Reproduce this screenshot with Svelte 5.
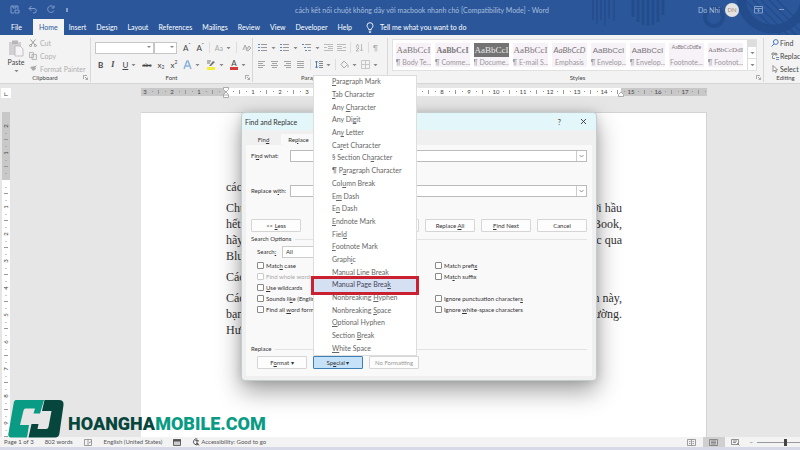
<script lang="ts">
    const tabs = ['File', 'Home', 'Insert', 'Design', 'Layout', 'References', 'Mailings', 'Review', 'View', 'Developer', 'Help'];

    const styles = [
        { sample: 'AaBbCcI', name: '¶ Body Te...', kind: 'serif' },
        { sample: 'AaBbCcI', name: '¶ Comme...', kind: 'serif bold' },
        { sample: 'AaBbCcI', name: '¶ Docume...', kind: 'serif dark' },
        { sample: 'AaBbCcI', name: '¶ E-mail S...', kind: 'serif' },
        { sample: 'AaBbCcD', name: 'Emphasis', kind: 'italic' },
        { sample: 'AaBbCcI', name: '¶ Envelop...', kind: 'sans' },
        { sample: 'AaBbCcI', name: '¶ Envelop...', kind: 'sans' },
        { sample: 'AaBbCcDdEe', name: 'Footnote...', kind: 'tiny' },
        { sample: 'AaBbCcDdI', name: '¶ Footnot...', kind: 'serif small' },
    ];

    // "&" goes before the letter that is the keyboard shortcut
    const specials = [
        '&Paragraph Mark', '&Tab Character', 'Any &Character', 'Any Di&git', 'An&y Letter',
        'Ca&ret Character', '§ Section Ch&aracter', '¶ P&aragraph Character', 'Col&umn Break',
        'E&m Dash', 'E&n Dash', '&Endnote Mark', 'Fiel&d', '&Footnote Mark', 'Graph&ic',
        'Manual &Line Break', 'Manual Page Brea&k', 'Nonbreaking &Hyphen', 'Nonbreaking &Space',
        '&Optional Hyphen', 'Section &Break', '&White Space',
    ];

    const leftOptions = ['Matc&h case', 'Find whole words onl&y', '&Use wildcards', 'Sounds li&ke (English)', 'Find all &word forms'];
    const rightOptions = ['Match prefi&x', 'Ma&tch suffix', '', 'Ignore punctuation character&s', 'Ignore &white-space characters'];

    const paragraphs = [
        [['cách', '']],
        [['Chuột', 'với hầu'], ['hết', 'MacBook,'], ['hãy', 'hoặc qua'], ['Bluetooth', '']],
        [['Cách', '']],
        [['Các', 'bên này,'], ['bạn', 'thường.'], ['Hướng', '']],
    ];

    const CM = 27;
    const hMarks = Array.from({ length: 21 }, (_, i) => i - 3);
    const vMarks = Array.from({ length: 12 }, (_, i) => i - 2);

    let selected = $state('Manual Page Brea&k');
</script>

{#snippet key(text: string)}{@const p = text.split('&')}{p[0]}<u>{p[1][0]}</u>{p[1].slice(1)}{/snippet}

{#snippet caret()}
    <svg class="caret" width="5" height="4" viewBox="0 0 5 4"><path d="M.5 1h4L2.5 3.2z" fill="currentColor" /></svg>
{/snippet}

{#snippet launcher()}
    <svg class="launcher" width="5" height="5" viewBox="0 0 5 5" fill="none" stroke="#888" stroke-width=".7"><path d="M.5 4V.5H4M2 2l2.3 2.3M4.5 2.5v2h-2" /></svg>
{/snippet}

{#snippet option(text: string)}
    <label class="check" class:off={text.startsWith('Find whole')}>
        <input type="checkbox" disabled={text.startsWith('Find whole')} />
        <span>{@render key(text)}</span>
    </label>
{/snippet}

<div class="word">
    <header class="top">
        <svg class="pattern" width="215" height="35" viewBox="0 0 215 35" fill="none" stroke="#234c8c">
            <path d="M8 0v20M12 0v24M16 0v20M20 0v25M24 0v19M29 0v21" stroke-width="1.5" />
            <path d="M48 0v17M53 0v22M58 0v25M63 0v26M68 0v25M73 0v22M78 0v15" stroke-width="3" />
            <circle cx="129" cy="17" r="9" stroke-width="4" />
            <circle cx="188" cy="-3" r="32" stroke-width="9" />
            <path d="M160 0l35 35M168 0l35 35M176 0l35 35M184 0l31 31M192 0l23 23" stroke-width="1.5" />
        </svg>
        <div class="titlebar">
            <div class="quick">
                <button aria-label="Save"><svg width="10" height="9" viewBox="0 0 10 9"><path d="M1 1h7v3M1 1v7h3M3 1v2h3V1M5 8V5h4v3z" /></svg></button>
                <button aria-label="Undo"><svg width="10" height="9" viewBox="0 0 10 9"><path d="M3.5 1L1 3.5 3.5 6M1 3.5h5a2 2 0 0 1 0 4.5H5" /></svg></button>
                <button aria-label="Repeat"><svg width="10" height="9" viewBox="0 0 10 9"><path d="M7.5 2A3.3 3.3 0 1 0 8 5.5M8 .5v2.5H5.5" /></svg></button>
                <button aria-label="Customize"><svg width="6" height="9" viewBox="0 0 6 9"><path d="M2 4h2M2 6h2" stroke="#dce5f3" /></svg></button>
            </div>
            <span class="doc-title">cách kết nối chuột không dây với macbook nhanh chó [Compatibility Mode] - Word</span>
            <div class="account">
                <span>Do Nhi</span>
                <span class="avatar">DN</span>
                <button aria-label="Ribbon display"><svg width="9" height="8" viewBox="0 0 9 8"><path d="M.5.5h8v6.500h-8zM.5 2.500h8M4.500 6V3.500M3.300 4.600l1.200-1.200 1.200 1.200" /></svg></button>
                <button aria-label="Minimize"><svg width="7" height="8" viewBox="0 0 7 8"><path d="M1 3.500h5" /></svg></button>
            </div>
        </div>
        <nav class="tabs">
            {#each tabs as tab}
                <button class="tab" class:active={tab === 'Home'}>{tab}</button>
            {/each}
            <button class="tell">
                <svg width="8" height="11" viewBox="0 0 8 11" fill="none" stroke="#fff" stroke-width=".9"><path d="M2.700 7.500C2.700 6 1 5.500 1 3.700a3 3 0 0 1 6 0C7 5.500 5.300 6 5.300 7.500zM2.800 9.200h2.400M3.200 10.500h1.600" /></svg>
                Tell me what you want to do
            </button>
        </nav>
    </header>

    <section class="ribbon">
        <div class="group clipboard">
            <div class="body">
                <button class="paste">
                    <svg width="16" height="18" viewBox="0 0 16 18"><path d="M1 3h12v13H1z" fill="#d3cfd2" /><path d="M4 1.500h6V5H4z" fill="#b9b5b8" /><path d="M7 7h5l3 3v7H7z" fill="#f6f4f6" stroke="#b5b5b5" stroke-width=".8" /></svg>
                    <span>Paste</span>
                    {@render caret()}
                </button>
                <div class="stack muted">
                    <button><svg width="8" height="8" viewBox="0 0 8 8" fill="none" stroke="#999"><path d="M1.500.5L6 6M6.500.5L2 6" /><circle cx="1.600" cy="6.600" r="1" /><circle cx="6.400" cy="6.600" r="1" /></svg>Cut</button>
                    <button><svg width="8" height="8" viewBox="0 0 8 8" fill="#eee" stroke="#aaa" stroke-width=".8"><path d="M.5.5h4v5h-4zM3 2.500h4.500v5H3z" /></svg>Copy</button>
                    <button><svg width="8" height="8" viewBox="0 0 8 8"><path d="M1 2l3 4 3-2-1-3z" fill="#aaa" /><path d="M6 2l1.500-1.500" stroke="#aaa" /></svg>Format Painter</button>
                </div>
            </div>
            <div class="caption">Clipboard{@render launcher()}</div>
        </div>

        <div class="group font">
            <div class="body rows">
                <div class="row">
                    <select class="face" aria-label="Font"><option></option></select>
                    <select class="size" aria-label="Font size"><option></option></select>
                    <button class="grow">A<sup>ˆ</sup></button>
                    <button class="grow">A<sup>ˇ</sup></button>
                    <i class="sep"></i>
                    <button class="pale">Aa {@render caret()}</button>
                    <i class="sep"></i>
                    <button aria-label="Clear formatting"><svg width="10" height="9" viewBox="0 0 10 9" fill="none" stroke="#aaa"><path d="M1 7l2-5 2 4M4 7l3-4 2 2-3 3z" fill="#ddd" /></svg></button>
                </div>
                <div class="row letters">
                    <button><b>B</b></button>
                    <button><em>I</em></button>
                    <button><u>U</u> {@render caret()}</button>
                    <button class="strike">abc</button>
                    <button>x<sub>2</sub></button>
                    <button>x<sup>2</sup></button>
                    <button aria-label="Text effects"><svg width="9" height="10" viewBox="0 0 9 10" fill="none" stroke="#8db2dd" stroke-width="1.500"><path d="M1 9l3-8h1l3 8M2.500 6h4" /></svg>{@render caret()}</button>
                    <button aria-label="Highlight"><svg width="10" height="10" viewBox="0 0 10 10"><path d="M1 7h8v3H1z" fill="#f4ee35" /><path d="M3 6l4-5 2 1-4 4z" fill="#777" /><path d="M1 1h4M1 3h3" stroke="#777" /></svg>{@render caret()}</button>
                    <button class="colour"><span>A</span>{@render caret()}</button>
                </div>
            </div>
            <div class="caption">Font{@render launcher()}</div>
        </div>

        <div class="group para">
            <div class="body rows">
                <div class="row">
                    {#each [0, 1, 2] as n}
                        <button aria-label="List"><svg width="10" height="9" viewBox="0 0 10 9"><path d="M0 1.500h2M{n === 2 ? 2 : 0} 4.500h2M{n === 2 ? 3 : 0} 7.500h2" stroke="#5c87c0" /><path d="M3 1.500h6M{n === 2 ? 5 : 3} 4.500h{n === 2 ? 4 : 6}M{n === 2 ? 6 : 3} 7.500h{n === 2 ? 3 : 6}" stroke="#999" /></svg>{@render caret()}</button>
                    {/each}
                    <button aria-label="Decrease indent"><svg width="9" height="9" viewBox="0 0 9 9" stroke="#bbb"><path d="M0 1.500h9M4 3.500h5M4 5.500h5M0 7.500h9M0 4.500h3" /></svg></button>
                    <button aria-label="Increase indent"><svg width="9" height="9" viewBox="0 0 9 9" stroke="#bbb"><path d="M0 1.500h9M0 3.500h5M0 5.500h5M0 7.500h9M6 4.500h3" /></svg></button>
                    <i class="sep"></i>
                    <button aria-label="Sort"><svg width="9" height="9" viewBox="0 0 9 9" fill="none" stroke="#aaa" stroke-width=".8"><path d="M1 4l1.500-3L4 4M1 5h3L1 8h3M6.500 1v7M5 6.500L6.500 8 8 6.500" /></svg></button>
                    <i class="sep"></i>
                    <button class="pale">¶</button>
                </div>
                <div class="row">
                    {#each ['M0 1.500h7M0 3.500h5M0 5.500h7M0 7.500h5', 'M0 1.500h7M1 3.500h5M0 5.500h7M1 7.500h5', 'M0 1.500h7M2 3.500h5M0 5.500h7M2 7.500h5', 'M0 1.500h7M0 3.500h7M0 5.500h7M0 7.500h7'] as d}
                        <button class="align" aria-label="Align"><svg width="7" height="9" viewBox="0 0 7 9" stroke="#a5a5a5"><path {d} /></svg></button>
                    {/each}
                    <i class="sep"></i>
                    <button aria-label="Line spacing"><svg width="8" height="9" viewBox="0 0 8 9"><path d="M1.500 1v7M0 2.500L1.500 1 3 2.500M0 6.500L1.500 8 3 6.500" fill="none" stroke="#4c7dbb" /><path d="M4 1.500h4M4 3.500h4M4 5.500h4M4 7.500h4" stroke="#888" /></svg>{@render caret()}</button>
                    <i class="sep"></i>
                    <button class="pale" aria-label="Shading"><svg width="9" height="9" viewBox="0 0 9 9" fill="none" stroke="#aaa"><path d="M1 4.500L4 1l3.500 3.500L4 8zM8 5v2.500" /></svg>{@render caret()}</button>
                    <button class="pale" aria-label="Borders"><svg width="9" height="9" viewBox="0 0 9 9" fill="none" stroke="#bbb" stroke-width=".8"><path d="M.5.5h8v8h-8zM4.500.5v8M.5 4.500h8" /></svg>{@render caret()}</button>
                </div>
            </div>
            <div class="caption left">Paragraph</div>
        </div>

        <div class="group styles">
            <div class="gallery">
                {#each styles as s}
                    <button class="style">
                        <span class="sample {s.kind}">{s.sample}</span>
                        <span class="name">{s.name}</span>
                    </button>
                {/each}
                <div class="scroll">
                    <button aria-label="Up"></button>
                    <button aria-label="Down">{@render caret()}</button>
                    <button aria-label="More">{@render caret()}</button>
                </div>
            </div>
            <div class="caption">Styles{@render launcher()}</div>
        </div>

        <div class="group editing">
            <div class="stack">
                <button><svg width="8" height="8" viewBox="0 0 8 8" fill="none" stroke="#4377b9"><circle cx="4.800" cy="3" r="2.400" /><path d="M3 5L.5 7.500" /></svg>Find</button>
                <button><svg width="8" height="8" viewBox="0 0 8 8" fill="none" stroke="#777" stroke-width=".8"><path d="M1 3V1h2v2zM4 .5V3h2V1.500H4M1.500 4v2.500H4" /><path d="M5 5.500h3M5 7.500h3" stroke="#4377b9" /></svg>Replace</button>
                <button><svg width="8" height="8" viewBox="0 0 8 8" fill="#fff" stroke="#777" stroke-width=".8"><path d="M2 .5v6l1.500-1.500L4.500 7.500l1-.5-1-2h2z" /></svg>Select</button>
            </div>
            <div class="caption">Editing</div>
        </div>
    </section>

    <div class="ruler-row">
        <div class="corner">∟</div>
        <svg class="hruler" height="8">
            <rect width="100%" height="8" fill="#c8c8c8" />
            <rect x="85" width="395" height="8" fill="#fff" />
            {#each hMarks as n}
                {@const x = 85 + n * CM}
                {#if n !== 0}<text {x} y="6">{Math.abs(n)}</text>{/if}
                <path d="M{x + 7} 3.500h1M{x + 13.500} 2v4M{x + 20} 3.500h1" stroke="#999" />
            {/each}
        </svg>
        <svg class="marker start" width="6" height="11" viewBox="0 0 6 11"><path d="M.5.5h5v2L3 5 .5 2.500zM3 5l2.500 2.500v3h-5v-3zM.5 8h5" /></svg>
        <svg class="marker end" width="6" height="11" viewBox="0 0 6 11"><path d="M3 5l2.500 2.500v2h-5v-2z" /></svg>
    </div>

    <main class="workspace">
        <svg class="vruler" width="8">
            <rect width="8" height="100%" fill="#fff" />
            <rect width="8" height="68" fill="#c8c8c8" />
            {#each vMarks as n}
                {@const y = 68 + n * CM}
                {#if n !== 0}<text x="0" y="2" transform="translate(4 {y}) rotate(-90)">{Math.abs(n)}</text>{/if}
                <path d="M4 {y + 7}v1M2 {y + 13.500}h4M4 {y + 20}v1" stroke="#999" />
            {/each}
        </svg>
        <article class="page">
            {#each paragraphs as lines}
                <div class="para-text">
                    {#each lines as [start, end]}
                        <p><span>{start}</span><span>{end}</span></p>
                    {/each}
                </div>
            {/each}
        </article>
    </main>

    <footer class="status">
        <span>Page 1 of 3</span>
        <span>802 words</span>
        <svg width="9" height="7" viewBox="0 0 9 7" fill="none" stroke="#888" stroke-width=".8"><path d="M.5.5h7v6h-7zM4 .5v6M5 4l3-2" /></svg>
        <span>English (United States)</span>
        <svg width="8" height="7" viewBox="0 0 8 7"><path d="M.5.5h7v6h-7z" fill="#ccc" stroke="#666" /><path d="M0 1.500h8" stroke="#555" stroke-width="2" /></svg>
        <span class="access"><svg width="8" height="8" viewBox="0 0 8 8" fill="none" stroke="#444" stroke-width=".9"><path d="M5.500 1A3 3 0 1 0 6.500 6M3 2l4 1M5 3v2l2 2.500M5 5L3.500 7" /></svg>Accessibility: Good to go</span>
        <div class="views">
            <button aria-label="Read mode"><svg width="9" height="7" viewBox="0 0 9 7" fill="none" stroke="#888" stroke-width=".8"><path d="M.5.5h8v6h-8zM4.500 0v7M2 2.500h1.500M2 4.500h1.500M5.500 2.500H7M5.500 4.500H7" /></svg></button>
            <button class="on" aria-label="Print layout"><svg width="9" height="7" viewBox="0 0 9 7" fill="none" stroke="#777" stroke-width=".8"><path d="M.5.5h8v6h-8zM2 2h5M2 3.500h5M2 5h5" /></svg></button>
            <button aria-label="Web layout"><svg width="9" height="7" viewBox="0 0 9 7" fill="none" stroke="#777" stroke-width=".8"><path d="M.5.5h7v5h-7zM2 2h4M2 3.500h3M6 4l2.500 2.500" /></svg></button>
            <span class="minus">−</span>
            <input type="range" aria-label="Zoom" min="0" max="100" value="50" />
        </div>
    </footer>

    <div class="brand">
        <svg width="56" height="38" viewBox="0 0 56 38">
            <path d="M8 0H36L32 13.500H25.500L27 8.500H17.500Q16 8.500 15.500 10.500L12 25H21L19 37.500H3Q-.5 37.500.5 33L5.500 4Q6 0 8 0Z" fill="#0a9b84" />
            <path d="M36.500 0H51Q56 0 55.500 5L51.500 33Q51 37.500 47 37.500H20.500L23.500 24H30.500L29.500 29H38Q40 29 40.500 27L43.500 11H34Z" fill="#07463d" />
        </svg>
        <span><span class="deep">HOANGHA</span>MOBILE.COM</span>
    </div>

    <div class="dialog" role="dialog" aria-label="Find and Replace">
        <div class="dialog-title">
            <span>Find and Replace</span>
            <button aria-label="Help">?</button>
            <button aria-label="Close"><svg width="7" height="7" viewBox="0 0 7 7" stroke="#333" stroke-width=".9"><path d="M1 1l5 5M6 1L1 6" /></svg></button>
        </div>
        <div class="dialog-tabs">
            <button>{@render key('Fin&d')}</button>
            <button class="active">{@render key('Re&place')}</button>
        </div>
        <div class="panel">
            {#each ['Fi&nd what:', 'Replace w&ith:'] as text, i}
                <div class="field">
                    <label for="term{i}">{@render key(text)}</label>
                    <div class="combo">
                        <input id="term{i}" type="text" />
                        <button aria-label="History"><svg width="5" height="4" viewBox="0 0 5 4" fill="none" stroke="#777" stroke-width=".8"><path d="M.5 1l2 2 2-2" /></svg></button>
                    </div>
                </div>
            {/each}
            <div class="actions">
                <button class="btn first">{@render key('<< &Less')}</button>
                <button class="btn">{@render key('&Replace')}</button>
                <button class="btn">{@render key('Replace &All')}</button>
                <button class="btn">{@render key('&Find Next')}</button>
                <button class="btn">Cancel</button>
            </div>
            <div class="legend">Search Options</div>
            <div class="search">
                <label for="dir">{@render key('Search&:')}</label>
                <select id="dir"><option>All</option><option>Down</option><option>Up</option></select>
            </div>
            <div class="options">
                <div>{#each leftOptions as text}{@render option(text)}{/each}</div>
                <div>{#each rightOptions as text}{#if text}{@render option(text)}{:else}<div class="check"></div>{/if}{/each}</div>
            </div>
            <div class="legend">Replace</div>
            <div class="bottom">
                <button class="btn">{@render key('F&ormat')} ▾</button>
                <div class="special">
                    <button class="btn pressed">{@render key('Sp&ecial')} ▾</button>
                    <div class="menu" role="menu">
                        {#each specials as text}
                            <button role="menuitem" class:marked={text === selected} onclick={() => (selected = text)}>{@render key(text)}</button>
                        {/each}
                    </div>
                </div>
                <button class="btn" disabled>No Formatting</button>
            </div>
        </div>
    </div>
</div>

<style>
    :global(body) {
        margin: 0;
        overflow: hidden;
    }
    .word {
        position: relative;
        display: flex;
        flex-direction: column;
        min-height: 100vh;
        overflow: hidden;
        background: #e6e6e6;
        font: 7px/10px Lato, "Open Sans", sans-serif;
        color: #444;
    }
    .word * {
        box-sizing: border-box;
    }
    button, input, select {
        font: inherit;
        color: inherit;
        margin: 0;
        padding: 0;
        border: 0;
        border-radius: 0;
        background: none;
        white-space: nowrap;
    }
    select {
        appearance: none;
    }
    svg {
        display: block;
        flex: none;
    }
    u {
        text-underline-offset: 1px;
        text-decoration-thickness: 1px;
    }

    /* title bar and tabs */
    .top {
        position: relative;
        background: #2b579a;
        color: #fff;
    }
    .pattern {
        position: absolute;
        right: 0;
        top: 0;
    }
    .titlebar {
        position: relative;
        display: grid;
        grid-template-columns: 1fr auto 1fr;
        align-items: center;
        height: 19px;
        padding-left: 10px;
        color: #a9bedd;
    }
    .doc-title {
        margin-left: 34px;
    }
    .quick, .account {
        display: flex;
        align-items: center;
        gap: 8px;
    }
    .quick svg, .account svg {
        fill: none;
        stroke: #7f9cca;
        stroke-width: 1;
    }
    .account {
        justify-content: flex-end;
        gap: 5px;
        padding-right: 15px;
    }
    .account button {
        margin-left: 10px;
    }
    .avatar {
        width: 14px;
        height: 14px;
        border-radius: 50%;
        background: #e3e3e3;
        color: #a08f80;
        font-size: 6px;
        line-height: 14px;
        text-align: center;
    }
    .tabs {
        position: relative;
        display: flex;
        height: 16px;
        padding-left: 6px;
    }
    .tab {
        padding: 0 5px;
    }
    .tab:first-child {
        padding-right: 11px;
    }
    .tab.active {
        padding: 0 6px;
        background: #f3f3f3;
        color: #2b579a;
    }
    .tell {
        display: flex;
        align-items: center;
        gap: 6px;
        margin-left: 9px;
    }

    /* ribbon */
    .ribbon {
        display: flex;
        height: 49px;
        padding: 3px 0 1px;
        background: #f3f3f3;
        border-bottom: 1px solid #d5d5d5;
    }
    .group {
        display: flex;
        flex-direction: column;
        flex: none;
        justify-content: space-between;
        border-right: 1px solid #d8d8d8;
    }
    .clipboard { width: 91px; }
    .font { width: 162px; }
    .para { width: 135px; }
    .styles {
        flex: 1;
        min-width: 0;
        padding-left: 4px;
    }
    .editing {
        width: 36px;
        padding-left: 7px;
        border: 0;
        overflow: hidden;
    }
    .body {
        display: flex;
    }
    .body.rows {
        flex-direction: column;
        gap: 4px;
        padding: 3px 0 0 4px;
    }
    .caption {
        position: relative;
        height: 8px;
        line-height: 8px;
        text-align: center;
        font-size: 6px;
    }
    .caption.left {
        padding-left: 48px;
        text-align: left;
    }
    .launcher {
        position: absolute;
        right: 2px;
        top: 1px;
    }
    .paste {
        display: flex;
        flex-direction: column;
        align-items: center;
        width: 29px;
        padding: 1px 0 0 3px;
    }
    .paste .caret {
        margin-top: 2px;
    }
    .stack {
        display: flex;
        flex-direction: column;
        gap: 3px;
    }
    .stack button {
        display: flex;
        align-items: center;
        gap: 3px;
        height: 10px;
    }
    .editing button {
        gap: 1px;
    }
    .muted {
        color: #b0b0b0;
    }
    .caret {
        display: inline-block;
        color: #888;
    }
    .row {
        display: flex;
        align-items: center;
        gap: 5px;
        height: 13px;
    }
    .row button {
        display: flex;
        align-items: center;
        gap: 3px;
    }
    .face, .size {
        height: 12px;
        border: 1px solid #c6c6c6;
        background: #fff url("data:image/svg+xml,%3Csvg xmlns='http://www.w3.org/2000/svg' width='4' height='3'%3E%3Cpath d='M0 0h4L2 2z' fill='%23888'/%3E%3C/svg%3E") right 2px center no-repeat;
    }
    .face { width: 62px; }
    .size {
        width: 24px;
        margin-left: -5px;
    }
    .grow {
        font-size: 8px;
        padding-left: 1px;
    }
    .row sup, .row sub {
        font-size: 5px;
        line-height: 5px;
        margin-left: -3px;
    }
    .row sup {
        align-self: flex-start;
    }
    .row sub {
        align-self: flex-end;
    }
    .sep {
        width: 1px;
        height: 11px;
        background: #ddd;
    }
    .pale {
        color: #aaa;
    }
    .letters {
        gap: 6px;
        padding-left: 3px;
        font-size: 8px;
    }
    .letters em {
        padding: 0 2px;
        font-family: "Liberation Serif", serif;
        font-weight: bold;
    }
    .strike {
        font-size: 6px;
        text-decoration: line-through;
    }
    .colour span {
        padding: 0 1px;
        border-bottom: 3px solid #d63a3a;
        line-height: 8px;
    }
    .para .row {
        gap: 4px;
        padding-left: 1px;
    }
    .align {
        width: 9px;
    }
    .gallery {
        display: flex;
        gap: 4px;
        height: 32px;
        margin-right: 6px;
        margin-top: 1px;
        padding-left: 3px;
        background: #fff;
        border: 1px solid #e1e1e1;
    }
    .style {
        display: flex;
        flex-direction: column;
        align-items: center;
        flex: 1 1 0;
        min-width: 0;
        overflow: hidden;
        margin: 3px 0;
        background: #f7f1f8;
        color: #999;
    }
    .sample {
        height: 15px;
        width: 100%;
        line-height: 15px;
        color: #777;
        overflow: hidden;
    }
    .serif { font-family: "Liberation Serif", serif; font-size: 9px; }
    .serif.small { font-size: 7px; }
    .serif.bold { font-size: 8px; font-weight: bold; }
    .serif.dark { background: #737373; color: #e8e8e8; }
    .italic { font-style: italic; font-size: 8px; }
    .sans { font-family: "Liberation Sans", sans-serif; font-size: 8px; }
    .tiny { font-size: 5px; line-height: 9px; }
    .scroll {
        display: grid;
        width: 9px;
        flex: none;
        border-left: 1px solid #ddd;
    }
    .scroll button {
        line-height: 4px;
    }
    .scroll button:first-child {
        background: #ddd;
    }
    .scroll button + button {
        border-top: 1px solid #ddd;
    }

    /* rulers and page */
    .ruler-row {
        position: relative;
        display: flex;
        flex: none;
        height: 28px;
        padding: 4px 93px 0 1px;
    }
    .corner {
        width: 10px;
        height: 10px;
        margin-right: 130px;
        background: #fff;
        text-align: center;
        font-weight: bold;
    }
    .hruler {
        flex: 1;
        width: 0;
    }
    .hruler text, .vruler text {
        font-size: 6px;
        text-anchor: middle;
        fill: #444;
    }
    .marker {
        position: absolute;
        top: 3px;
        fill: #fff;
        stroke: #999;
        stroke-width: .8;
    }
    .start { left: 223px; }
    .end { left: 618px; }
    .workspace {
        display: flex;
        flex: 1;
        padding: 0 93px 0 2px;
    }
    .vruler {
        height: 325px;
        margin-bottom: -325px;
    }
    .page {
        flex: 1;
        margin-left: 131px;
        padding: 66px 84px 0 85px;
        background: #fff;
        border: solid #d4d4d4;
        border-width: 1px 1px 0 0;
        font: 12px/16px "Liberation Serif", serif;
        color: #333;
    }
    .para-text {
        margin-bottom: 5px;
    }
    .page p {
        display: flex;
        justify-content: space-between;
        margin: 0;
        height: 16px;
    }

    /* status bar */
    .status {
        display: flex;
        align-items: center;
        gap: 11px;
        height: 13px;
        padding-left: 4px;
        background: #f3f3f3;
        border-bottom: 3px solid #d7d9e9;
        font-size: 6px;
        color: #555;
    }
    .access {
        display: flex;
        align-items: center;
        gap: 1px;
    }
    .views {
        display: flex;
        align-items: center;
        height: 10px;
        margin-left: auto;
    }
    .views button {
        display: grid;
        place-items: center;
        width: 22px;
        height: 10px;
    }
    .views .on {
        background: #cfcfcf;
    }
    .minus {
        margin: 0 4px 0 3px;
    }
    .views input {
        appearance: none;
        width: 57px;
        height: 10px;
        margin-right: -14px;
        background: linear-gradient(#999, #999) center / 100% 1px no-repeat;
    }
    .views input::-webkit-slider-thumb {
        appearance: none;
        width: 3px;
        height: 7px;
        background: #444;
    }

    .brand {
        position: absolute;
        left: 8px;
        bottom: 12px;
        display: flex;
        align-items: flex-end;
        gap: 4px;
        font: 900 18px/28px Roboto, sans-serif;
        color: #0a9b84;
    }
    .deep {
        color: #07463d;
    }

    /* find and replace window */
    .dialog {
        position: absolute;
        left: 241px;
        top: 112px;
        width: 356px;
        padding-bottom: 4px;
        background: #f0f0f0;
        border: 1px solid #c4cccd;
        border-radius: 4px;
        box-shadow: 0 10px 24px rgba(0, 0, 0, .38), 0 0 8px rgba(0, 0, 0, .12);
        color: #333;
    }
    .dialog-title {
        display: flex;
        align-items: center;
        height: 17px;
        padding: 0 9px 0 3px;
        background: #e3f6fa;
        border-radius: 4px 4px 0 0;
    }
    .dialog-title span {
        margin-right: auto;
    }
    .dialog-title button {
        margin-left: 19px;
    }
    .dialog-tabs {
        display: flex;
        height: 15px;
        padding: 4px 0 0 4px;
    }
    .dialog-tabs button {
        width: 35px;
        font-size: 6px;
    }
    .dialog-tabs .active {
        background: #f9f9f9;
    }
    .panel {
        margin: 0 4px;
        padding: 5px 5px 7px;
        background: #f9f9f9;
        font-size: 6px;
    }
    .field {
        display: flex;
        align-items: center;
        height: 12px;
        margin-bottom: 23px;
    }
    .field label {
        width: 39px;
        white-space: nowrap;
    }
    .combo {
        display: flex;
        flex: 1;
        height: 12px;
        background: #fff;
        border: 1px solid #bbb;
    }
    .combo input {
        flex: 1;
        min-width: 0;
    }
    .combo button {
        display: grid;
        place-items: center;
        width: 10px;
        border-left: 1px solid #ccc;
    }
    .actions, .bottom {
        display: flex;
        gap: 6px;
    }
    .actions {
        margin-top: -1px;
    }
    .btn {
        width: 50px;
        height: 13px;
        background: #fdfdfd;
        border: 1px solid #d5d5d5;
        border-radius: 1px;
        line-height: 10px;
    }
    .btn:disabled {
        color: #999;
    }
    .first {
        margin-right: auto;
    }
    .legend {
        display: flex;
        align-items: center;
        gap: 4px;
        height: 10px;
        margin: 2px 0;
    }
    .legend::after {
        content: "";
        flex: 1;
        height: 1px;
        background: #e3e3e3;
    }
    .search {
        display: flex;
        align-items: center;
        height: 12px;
        padding-left: 6px;
    }
    .search label {
        width: 25px;
    }
    .search select {
        width: 90px;
        height: 12px;
        padding-left: 3px;
        background: #fff;
        border: 1px solid #ccc;
    }
    .options {
        display: grid;
        grid-template-columns: 178px 1fr;
        padding-left: 6px;
        margin: 2px 0 29px;
    }
    .check {
        display: flex;
        align-items: center;
        gap: 2px;
        height: 11px;
        white-space: nowrap;
    }
    .check input {
        appearance: none;
        width: 7px;
        height: 7px;
        background: #fff;
        border: 1px solid #888;
        border-radius: 1px;
    }
    .off {
        color: #aaa;
    }
    .off input {
        border-color: #ccc;
    }
    .bottom {
        padding-left: 6px;
    }
    .special {
        position: relative;
        height: 13px;
    }
    .pressed {
        background: #c5e2f8;
        border-color: #3f7fb5;
    }
    .menu {
        position: absolute;
        left: 0;
        bottom: 100%;
        display: flex;
        flex-direction: column;
        width: 104px;
        height: 281px;
        background: #fff;
        border: 1px solid #ddd;
        font-size: 7px;
        color: #666;
    }
    .menu button {
        flex: 1;
        padding: 0 0 2px 18px;
        text-align: left;
        line-height: 10px;
    }
    .menu .marked {
        background: #d5e0f3;
        outline: 3px solid #cb2030;
        color: #445;
    }
</style>
